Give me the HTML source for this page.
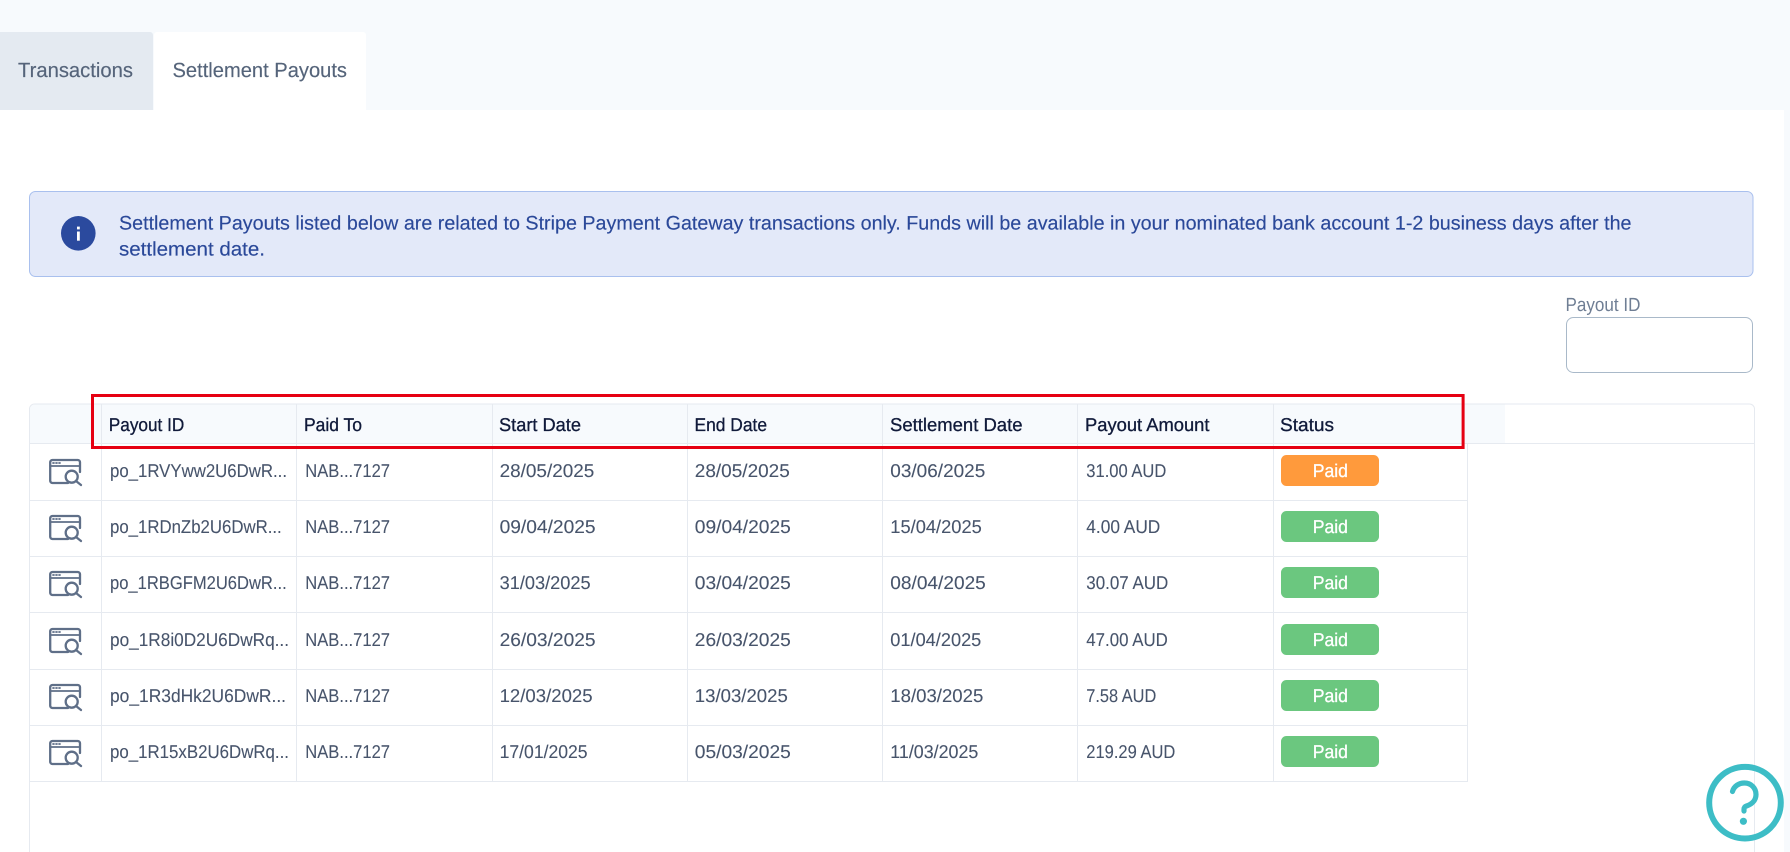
<!DOCTYPE html>
<html lang="en">
<head>
<meta charset="utf-8">
<title>Settlement Payouts</title>
<style>
html,body{margin:0;padding:0;width:1790px;height:852px;overflow:hidden;background:#fff}
svg{display:block}
text{font-family:"Liberation Sans",sans-serif;text-rendering:geometricPrecision}
.tab{font-size:20.5px;fill:#55647a;stroke:#55647a;stroke-width:.15}
.al{font-size:19.5px;fill:#2a4899;stroke:#2a4899;stroke-width:.15}
.lb{font-size:19px;fill:#6f7e94}
.th{font-size:18.5px;fill:#101a3a;stroke:#101a3a;stroke-width:.3}
.td{font-size:18.5px;fill:#47546b;stroke:#47546b;stroke-width:.1}
.pd{font-size:18.5px;fill:#fff;stroke:#fff;stroke-width:.3}
.ln{stroke:#e6eaf0;stroke-width:1;fill:none}
</style>
</head>
<body>
<svg xmlns="http://www.w3.org/2000/svg" width="1790" height="852" viewBox="0 0 1790 852">
<defs>
<g id="ic" fill="none" stroke="#5f6f88" stroke-width="2.3" stroke-linecap="round" stroke-linejoin="round">
<path d="M19 24H3.4a2.2 2.2 0 0 1-2.2-2.2V3.2A2.2 2.2 0 0 1 3.4 1h25.4a2.2 2.2 0 0 1 2.2 2.2V13"/>
<path d="M1.2 7H31" stroke-width="1.8"/>
<path d="M4 4h1M7 4h1M10 4h1" stroke-width="1.8"/>
<circle cx="22.7" cy="17.7" r="6"/>
<path d="M27 22l5 4"/>
</g>
</defs>

<!-- page background bands -->
<rect x="0" y="0" width="1790" height="110" fill="#f7fafd"/>
<rect x="1784" y="0" width="6" height="852" fill="#f7fafd"/>

<!-- tabs -->
<path d="M0 32H150a3 3 0 0 1 3 3V110H0Z" fill="#e4eaf1"/>
<path d="M154 35a3 3 0 0 1 3-3H363a3 3 0 0 1 3 3V110H154Z" fill="#fff"/>
<text class="tab" x="18" y="77.2" textLength="115" lengthAdjust="spacingAndGlyphs">Transactions</text>
<text class="tab" x="172.5" y="77.2" textLength="174.5" lengthAdjust="spacingAndGlyphs">Settlement Payouts</text>

<!-- alert -->
<rect x="29.5" y="191.5" width="1723.5" height="85" rx="6" fill="#e3e9f9" stroke="#a9c0ee" stroke-width="1"/>
<circle cx="78.3" cy="233.3" r="17.3" fill="#2b4a9e"/>
<rect x="77" y="231.5" width="2.8" height="9.2" fill="#fff"/>
<rect x="77" y="226.6" width="2.8" height="2.8" fill="#fff"/>
<text class="al" x="119" y="229.3" textLength="1512.5" lengthAdjust="spacingAndGlyphs">Settlement Payouts listed below are related to Stripe Payment Gateway transactions only. Funds will be available in your nominated bank account 1-2 business days after the</text>
<text class="al" x="119" y="255.3" textLength="146" lengthAdjust="spacingAndGlyphs">settlement date.</text>

<!-- search field -->
<text class="lb" x="1565.5" y="311.2" textLength="75" lengthAdjust="spacingAndGlyphs">Payout ID</text>
<rect x="1566.5" y="317.5" width="186" height="55" rx="7" fill="#fff" stroke="#a9b9c9" stroke-width="1"/>

<!-- table container -->
<path class="ln" d="M29.5 852V409a5 5 0 0 1 5-5H1749.5a5 5 0 0 1 5 5V852"/>
<path d="M30 409a4.5 4.5 0 0 1 4.5-4.5H1505V443H30Z" fill="#f7fafd"/>
<path class="ln" d="M30 443.5H1754"/>
<path class="ln" d="M30 500.5H1467.5M30 556.5H1467.5M30 612.5H1467.5M30 669.5H1467.5M30 725.5H1467.5M30 781.5H1467.5"/>
<path class="ln" d="M101.5 404V782M296.5 404V782M492.5 404V782M687.5 404V782M882.5 404V782M1077.5 404V782M1273.5 404V782M1467.5 443V782"/>

<!-- table header -->
<text class="th" x="108.8" y="431" textLength="75.5" lengthAdjust="spacingAndGlyphs">Payout ID</text>
<text class="th" x="304" y="431" textLength="58" lengthAdjust="spacingAndGlyphs">Paid To</text>
<text class="th" x="499" y="431" textLength="82" lengthAdjust="spacingAndGlyphs">Start Date</text>
<text class="th" x="694.5" y="431" textLength="72.5" lengthAdjust="spacingAndGlyphs">End Date</text>
<text class="th" x="890" y="431" textLength="132.5" lengthAdjust="spacingAndGlyphs">Settlement Date</text>
<text class="th" x="1085" y="431" textLength="124.5" lengthAdjust="spacingAndGlyphs">Payout Amount</text>
<text class="th" x="1280" y="431" textLength="54" lengthAdjust="spacingAndGlyphs">Status</text>

<!-- row 1 -->
<use href="#ic" x="49" y="459"/>
<text class="td" x="110" y="477.1" textLength="177" lengthAdjust="spacingAndGlyphs">po_1RVYww2U6DwR...</text>
<text class="td" x="305.3" y="477.1" textLength="84.7" lengthAdjust="spacingAndGlyphs">NAB...7127</text>
<text class="td" x="499.6" y="477.1" textLength="94.7" lengthAdjust="spacingAndGlyphs">28/05/2025</text>
<text class="td" x="694.8" y="477.1" textLength="95" lengthAdjust="spacingAndGlyphs">28/05/2025</text>
<text class="td" x="890.3" y="477.1" textLength="95" lengthAdjust="spacingAndGlyphs">03/06/2025</text>
<text class="td" x="1086.3" y="477.1" textLength="80" lengthAdjust="spacingAndGlyphs">31.00 AUD</text>
<rect x="1281" y="455" width="98" height="31" rx="5.5" fill="#ff9a3c"/>
<text class="pd" x="1312.7" y="477" textLength="35.3" lengthAdjust="spacingAndGlyphs">Paid</text>

<!-- row 2 -->
<use href="#ic" x="49" y="515"/>
<text class="td" x="110" y="533.1" textLength="171.7" lengthAdjust="spacingAndGlyphs">po_1RDnZb2U6DwR...</text>
<text class="td" x="305.3" y="533.1" textLength="84.7" lengthAdjust="spacingAndGlyphs">NAB...7127</text>
<text class="td" x="499.6" y="533.1" textLength="96" lengthAdjust="spacingAndGlyphs">09/04/2025</text>
<text class="td" x="694.8" y="533.1" textLength="96" lengthAdjust="spacingAndGlyphs">09/04/2025</text>
<text class="td" x="890.3" y="533.1" textLength="91.5" lengthAdjust="spacingAndGlyphs">15/04/2025</text>
<text class="td" x="1086.3" y="533.1" textLength="74" lengthAdjust="spacingAndGlyphs">4.00 AUD</text>
<rect x="1281" y="511" width="98" height="31" rx="5.5" fill="#6bc77f"/>
<text class="pd" x="1312.7" y="533" textLength="35.3" lengthAdjust="spacingAndGlyphs">Paid</text>

<!-- row 3 -->
<use href="#ic" x="49" y="571"/>
<text class="td" x="110" y="589.1" textLength="176.7" lengthAdjust="spacingAndGlyphs">po_1RBGFM2U6DwR...</text>
<text class="td" x="305.3" y="589.1" textLength="84.7" lengthAdjust="spacingAndGlyphs">NAB...7127</text>
<text class="td" x="499.6" y="589.1" textLength="91" lengthAdjust="spacingAndGlyphs">31/03/2025</text>
<text class="td" x="694.8" y="589.1" textLength="96" lengthAdjust="spacingAndGlyphs">03/04/2025</text>
<text class="td" x="890.3" y="589.1" textLength="95.5" lengthAdjust="spacingAndGlyphs">08/04/2025</text>
<text class="td" x="1086.3" y="589.1" textLength="82" lengthAdjust="spacingAndGlyphs">30.07 AUD</text>
<rect x="1281" y="567" width="98" height="31" rx="5.5" fill="#6bc77f"/>
<text class="pd" x="1312.7" y="589" textLength="35.3" lengthAdjust="spacingAndGlyphs">Paid</text>

<!-- row 4 -->
<use href="#ic" x="49" y="628"/>
<text class="td" x="110" y="646.1" textLength="179" lengthAdjust="spacingAndGlyphs">po_1R8i0D2U6DwRq...</text>
<text class="td" x="305.3" y="646.1" textLength="84.7" lengthAdjust="spacingAndGlyphs">NAB...7127</text>
<text class="td" x="499.6" y="646.1" textLength="96" lengthAdjust="spacingAndGlyphs">26/03/2025</text>
<text class="td" x="694.8" y="646.1" textLength="96" lengthAdjust="spacingAndGlyphs">26/03/2025</text>
<text class="td" x="890.3" y="646.1" textLength="91" lengthAdjust="spacingAndGlyphs">01/04/2025</text>
<text class="td" x="1086.3" y="646.1" textLength="81.5" lengthAdjust="spacingAndGlyphs">47.00 AUD</text>
<rect x="1281" y="624" width="98" height="31" rx="5.5" fill="#6bc77f"/>
<text class="pd" x="1312.7" y="646" textLength="35.3" lengthAdjust="spacingAndGlyphs">Paid</text>

<!-- row 5 -->
<use href="#ic" x="49" y="684"/>
<text class="td" x="110" y="702" textLength="176" lengthAdjust="spacingAndGlyphs">po_1R3dHk2U6DwR...</text>
<text class="td" x="305.3" y="702" textLength="84.7" lengthAdjust="spacingAndGlyphs">NAB...7127</text>
<text class="td" x="499.6" y="702" textLength="93" lengthAdjust="spacingAndGlyphs">12/03/2025</text>
<text class="td" x="694.8" y="702" textLength="93" lengthAdjust="spacingAndGlyphs">13/03/2025</text>
<text class="td" x="890.3" y="702" textLength="93" lengthAdjust="spacingAndGlyphs">18/03/2025</text>
<text class="td" x="1086.3" y="702" textLength="70" lengthAdjust="spacingAndGlyphs">7.58 AUD</text>
<rect x="1281" y="680" width="98" height="31" rx="5.5" fill="#6bc77f"/>
<text class="pd" x="1312.7" y="702" textLength="35.3" lengthAdjust="spacingAndGlyphs">Paid</text>

<!-- row 6 -->
<use href="#ic" x="49" y="740"/>
<text class="td" x="110" y="758" textLength="179" lengthAdjust="spacingAndGlyphs">po_1R15xB2U6DwRq...</text>
<text class="td" x="305.3" y="758" textLength="84.7" lengthAdjust="spacingAndGlyphs">NAB...7127</text>
<text class="td" x="499.6" y="758" textLength="88" lengthAdjust="spacingAndGlyphs">17/01/2025</text>
<text class="td" x="694.8" y="758" textLength="96" lengthAdjust="spacingAndGlyphs">05/03/2025</text>
<text class="td" x="890.3" y="758" textLength="88" lengthAdjust="spacingAndGlyphs">11/03/2025</text>
<text class="td" x="1086.3" y="758" textLength="89" lengthAdjust="spacingAndGlyphs">219.29 AUD</text>
<rect x="1281" y="736" width="98" height="31" rx="5.5" fill="#6bc77f"/>
<text class="pd" x="1312.7" y="758" textLength="35.3" lengthAdjust="spacingAndGlyphs">Paid</text>

<!-- red highlight -->
<rect x="92.5" y="395.5" width="1370.6" height="52" fill="none" stroke="#e60012" stroke-width="3"/>

<!-- help -->
<circle cx="1745" cy="802.7" r="35.8" fill="none" stroke="#3dbdc6" stroke-width="6"/>
<path d="M1732.5 791.5C1734 786 1739 783 1744.5 783C1751 783 1756 788 1756 794.5C1756 801 1751 804.5 1746.5 806C1744.7 806.6 1744 807.5 1744 809.5V811" fill="none" stroke="#3dbdc6" stroke-width="5.2" stroke-linecap="round"/>
<circle cx="1743.4" cy="821.3" r="3.6" fill="#3dbdc6"/>
</svg>
</body>
</html>
